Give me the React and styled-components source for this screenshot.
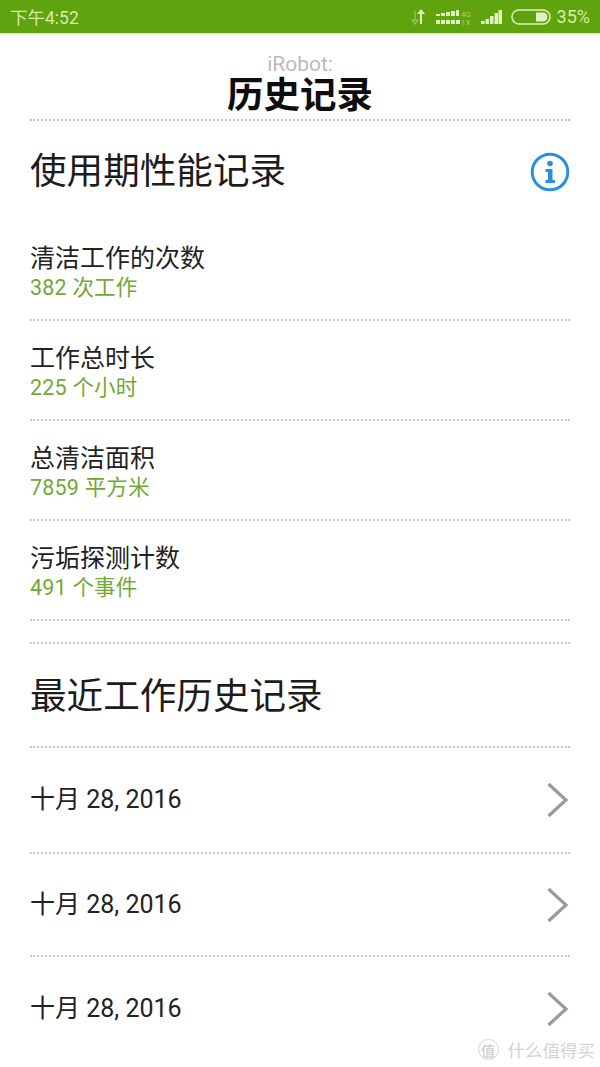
import React from "react";
import styled, { createGlobalStyle } from "styled-components";

const Global = createGlobalStyle`
  html, body { margin: 0; padding: 0; background: #fff; }
  body { font-family: "Roboto", "Noto Sans CJK SC", sans-serif; }
`;

const Page = styled.div`
  position: relative;
  width: 600px;
  height: 1067px;
  overflow: hidden;
  background: #fff;
  font-family: "Roboto", "Noto Sans CJK SC", sans-serif;
  color: #1c1c1c;
`;

const StatusBar = styled.div`
  height: 33px;
  background: #5fa30e;
  border-bottom: 1px solid #d5eaa0;
  display: flex;
  align-items: center;
  justify-content: space-between;
  padding: 0 10px;
  color: #d6eeaa;
  font-size: 17.5px;
`;

const StatusRight = styled.div`
  display: flex;
  align-items: center;
  gap: 9px;
`;

const Percent = styled.span`
  font-size: 18px;
  margin-left: -3px;
`;

const Header = styled.header`
  margin: 0 30px;
  height: 87px;
  box-sizing: border-box;
  padding-top: 20px;
  border-bottom: 2px dotted #c4c4c4;
  text-align: center;
`;

const Brand = styled.div`
  font-size: 21px;
  line-height: 20px;
  color: #bbbbbb;
`;

const Title = styled.h1`
  margin: 2px 0 0;
  font-size: 36.5px;
  line-height: 40px;
  font-weight: 700;
  color: #0d0d0d;
`;

const Body = styled.main`
  padding: 0 30px;
`;

const SectionHead = styled.div`
  display: flex;
  align-items: center;
  justify-content: space-between;
  height: ${(p) => p.$height}px;
  padding-top: ${(p) => p.$top || 0}px;
  box-sizing: border-box;
  border-bottom: ${(p) => (p.$line ? "2px dotted #c4c4c4" : "none")};
`;

const SectionTitle = styled.h2`
  margin: 0;
  font-size: 36.6px;
  font-weight: 400;
  line-height: 44px;
  color: #1c1c1c;
`;

const StatRow = styled.div`
  height: ${(p) => p.$height}px;
  box-sizing: border-box;
  display: flex;
  flex-direction: column;
  justify-content: flex-end;
  padding-bottom: 18px;
  border-bottom: 2px dotted #c9c9c9;
`;

const StatLabel = styled.div`
  font-size: 25px;
  line-height: 30px;
  color: #222;
`;

const StatValue = styled.div`
  font-size: 21.5px;
  line-height: 27px;
  letter-spacing: 0.2px;
  color: #72a838;
`;

const Spacer = styled.div`
  height: 23px;
  border-bottom: 2px dotted #c9c9c9;
  box-sizing: border-box;
`;

const DateRow = styled.div`
  display: flex;
  align-items: center;
  justify-content: space-between;
  height: ${(p) => p.$height}px;
  box-sizing: border-box;
  border-bottom: ${(p) => (p.$last ? "none" : "2px dotted #c9c9c9")};
  font-size: 25px;
  color: #222;
`;

const DateText = styled.span`
  padding-bottom: 6px;
`;

const Watermark = styled.div`
  position: absolute;
  right: 5px;
  bottom: 5px;
  display: flex;
  align-items: center;
  gap: 9px;
  font-size: 17.5px;
  color: #d4d4d4;
`;

const WatermarkBadge = styled.span`
  width: 19px;
  height: 19px;
  border: 1.5px solid #d4d4d4;
  border-radius: 50%;
  display: flex;
  align-items: center;
  justify-content: center;
  font-size: 14px;
  font-weight: 700;
`;

const NetIcon = () => (
  <svg width="16" height="18" viewBox="0 0 16 18" fill="none">
    <path d="M4 3v10M4 16l-3-4h6z" stroke="#8fbf4a" strokeWidth="1.6" />
    <path d="M10 16V5" stroke="#e2f3c0" strokeWidth="2" />
    <path d="M10 1l4 5H6z" fill="#e2f3c0" />
  </svg>
);

const DualSignal = () => (
  <svg width="36" height="16" viewBox="0 0 36 16" fill="#e0f2bd">
    {[0, 5, 10, 15].map((x, i) => (
      <rect key={x} x={x} y={5 - i} width="4" height={2 + i} />
    ))}
    <rect x="20" y="1" width="3" height="6" />
    {[0, 5, 10, 15, 20].map((x) => (
      <rect key={x} x={x} y="11" width="4" height="4" />
    ))}
    <text x="25" y="7.5" fontSize="8" fill="#a9d071" fontFamily="Roboto, sans-serif">4G</text>
    <text x="25" y="15.5" fontSize="8" fill="#a9d071" fontFamily="Roboto, sans-serif">1X</text>
  </svg>
);

const Signal = () => (
  <svg width="21" height="16" viewBox="0 0 21 16" fill="#e0f2bd">
    <rect x="0" y="12" width="3.5" height="3" />
    <rect x="4.5" y="10" width="3.5" height="5" />
    <rect x="9" y="7" width="3.5" height="8" />
    <rect x="13.5" y="4" width="3.5" height="11" />
    <rect x="17.5" y="1" width="3.5" height="14" />
  </svg>
);

const Battery = () => (
  <svg width="40" height="16" viewBox="0 0 40 16" fill="none">
    <rect x="1" y="1" width="38" height="14" rx="7" stroke="#e0f2bd" strokeWidth="1.5" />
    <path d="M25 3.5h7a4.5 4.5 0 0 1 0 9h-7z" fill="#e0f2bd" />
  </svg>
);

const InfoIcon = () => (
  <svg width="40" height="40" viewBox="0 0 40 40" fill="none">
    <circle cx="20" cy="20" r="17.8" stroke="#2a8fe0" strokeWidth="3" />
    <circle cx="20" cy="11.5" r="2.8" fill="#2a8fe0" />
    <path d="M15.5 17h7v11h2.5v3H15.5v-3H18v-8h-2.5z" fill="#2a8fe0" />
  </svg>
);

const Chevron = () => (
  <svg width="24" height="36" viewBox="0 0 24 36" fill="none">
    <path d="M2.5 2L20 18 2.5 34" stroke="#9a9a9a" strokeWidth="3.2" />
  </svg>
);

const stats = [
  { label: "清洁工作的次数", value: "382 次工作", height: 98 },
  { label: "工作总时长", value: "225 个小时", height: 100 },
  { label: "总清洁面积", value: "7859 平方米", height: 100 },
  { label: "污垢探测计数", value: "491 个事件", height: 100 },
];

const runs = [
  { date: "十月 28, 2016", height: 106 },
  { date: "十月 28, 2016", height: 103 },
  { date: "十月 28, 2016", height: 103, last: true },
];

export default function App() {
  return (
    <Page>
      <Global />
      <StatusBar>
        <span>下午4:52</span>
        <StatusRight>
          <NetIcon />
          <DualSignal />
          <Signal />
          <Battery />
          <Percent>35%</Percent>
        </StatusRight>
      </StatusBar>
      <Header>
        <Brand>iRobot:</Brand>
        <Title>历史记录</Title>
      </Header>
      <Body>
        <SectionHead $height={102}>
          <SectionTitle>使用期性能记录</SectionTitle>
          <InfoIcon />
        </SectionHead>
        {stats.map((s) => (
          <StatRow key={s.label} $height={s.height}>
            <StatLabel>{s.label}</StatLabel>
            <StatValue>{s.value}</StatValue>
          </StatRow>
        ))}
        <Spacer />
        <SectionHead $height={104} $top={3} $line>
          <SectionTitle>最近工作历史记录</SectionTitle>
        </SectionHead>
        {runs.map((r, i) => (
          <DateRow key={i} $height={r.height} $last={r.last}>
            <DateText>{r.date}</DateText>
            <Chevron />
          </DateRow>
        ))}
      </Body>
      <Watermark>
        <WatermarkBadge>值</WatermarkBadge>
        <span>什么值得买</span>
      </Watermark>
    </Page>
  );
}
